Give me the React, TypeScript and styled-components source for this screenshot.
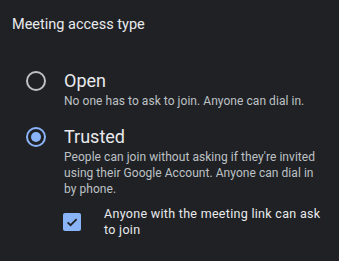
import React from "react";
import styled, { createGlobalStyle } from "styled-components";

const Global = createGlobalStyle`
  html, body { margin: 0; padding: 0; background: #202124; }
  body { font-family: Roboto, "Open Sans", sans-serif; color: #e8eaed; }
`;

const Panel = styled.div`
  width: 339px;
  height: 261px;
  box-sizing: border-box;
  padding: 15px 12px 0 12px;
  background: #202124;
`;

const Title = styled.div`
  font-size: 14.5px;
  line-height: 20px;
  color: #e8eaed;
`;

const Options = styled.div`
  display: flex;
  flex-direction: column;
  gap: 16px;
  margin-top: 34px;
  padding-left: 14px;
`;

const Option = styled.div`
  display: grid;
  grid-template-columns: 20px 1fr;
  column-gap: 18px;
`;

const RadioCell = styled.div`
  height: 24px;
  display: flex;
  align-items: center;
`;

const Radio = styled.div<{ $checked?: boolean }>`
  width: 20px;
  height: 20px;
  box-sizing: border-box;
  border-radius: 50%;
  border: 2px solid ${(p) => (p.$checked ? "#8ab4f8" : "#bdc1c6")};
  display: flex;
  align-items: center;
  justify-content: center;
  &::after {
    content: "";
    display: ${(p) => (p.$checked ? "block" : "none")};
    width: 10px;
    height: 10px;
    border-radius: 50%;
    background: #8ab4f8;
  }
`;

const OptionTitle = styled.div`
  font-size: 18px;
  line-height: 24px;
  color: #e8eaed;
`;

const Desc = styled.div`
  max-width: 258px;
  font-size: 12px;
  line-height: 16px;
  color: #bdc1c6;
  letter-spacing: 0.05px;
`;

const CheckRow = styled.label`
  display: flex;
  align-items: center;
  gap: 23px;
  margin-top: 9px;
  margin-left: -1px;
`;

const Box = styled.span`
  flex: none;
  width: 18px;
  height: 18px;
  border-radius: 2px;
  background: #8ab4f8;
  display: flex;
  align-items: center;
  justify-content: center;
`;

const CheckLabel = styled.span`
  max-width: 222px;
  font-size: 12.5px;
  line-height: 16px;
  color: #e8eaed;
  letter-spacing: 0.3px;
`;

export default function App() {
  return (
    <>
      <Global />
      <Panel>
        <Title>Meeting access type</Title>
        <Options>
          <Option>
            <RadioCell>
              <Radio />
            </RadioCell>
            <div>
              <OptionTitle>Open</OptionTitle>
              <Desc>No one has to ask to join. Anyone can dial in.</Desc>
            </div>
          </Option>
          <Option>
            <RadioCell>
              <Radio $checked />
            </RadioCell>
            <div>
              <OptionTitle>Trusted</OptionTitle>
              <Desc>
                People can join without asking if they're invited using their Google Account. Anyone can dial in
                by phone.
              </Desc>
              <CheckRow>
                <Box>
                  <svg width="14" height="14" viewBox="0 0 24 24">
                    <path d="M4.5 12.5l5 5L20 7" fill="none" stroke="#202124" strokeWidth="3" />
                  </svg>
                </Box>
                <CheckLabel>Anyone with the meeting link can ask to join</CheckLabel>
              </CheckRow>
            </div>
          </Option>
        </Options>
      </Panel>
    </>
  );
}
